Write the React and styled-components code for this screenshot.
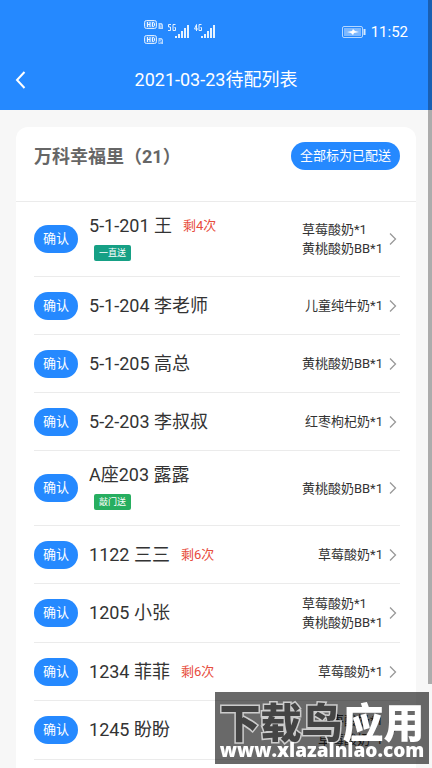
import React from 'react'
import styled, { createGlobalStyle } from 'styled-components'

const GlobalStyle = createGlobalStyle`
  body {
    margin: 0;
    background: #f7f7f7;
    font-family: Roboto, 'Noto Sans CJK SC', sans-serif;
    color: #333;
  }

  *,
  *::before,
  *::after {
    box-sizing: border-box;
  }
`

const Screen = styled.div`
  display: flex;
  flex-direction: column;
  height: 100vh;
  overflow: hidden;
`

const Header = styled.header`
  flex: none;
  background: #2589ff;
  color: #fff;
`

const StatusBar = styled.div`
  display: flex;
  align-items: center;
  justify-content: space-between;
  height: 50px;
  padding: 14px 24px 0 144px;
`

const Signal = styled.svg`
  display: block;
  width: 80px;
  height: 28px;
  font-weight: 700;
`

const Clock = styled.div`
  display: flex;
  align-items: center;
  gap: 5px;
  font-size: 15px;
  line-height: 20px;
`

const NavBar = styled.div`
  display: grid;
  grid-template-columns: 40px 1fr 40px;
  align-items: center;
  height: 60px;
`

const BackButton = styled.button`
  display: flex;
  align-items: center;
  height: 40px;
  padding: 0 0 0 15px;
  border: 0;
  background: none;
  color: inherit;
`

const PageTitle = styled.h1`
  margin: 0;
  font-size: 18px;
  font-weight: 400;
  line-height: 26px;
  text-align: center;
`

const Card = styled.main`
  flex: 1 0 auto;
  margin: 17px 16px 0;
  background: #fff;
  border-radius: 12px 12px 0 0;
`

const CardHeader = styled.div`
  display: flex;
  align-items: flex-start;
  justify-content: space-between;
  height: 75px;
  padding: 15px 16px 0 18px;
  border-bottom: 1px solid #ebebeb;
`

const Community = styled.h2`
  margin: 0;
  color: #666;
  font-size: 18px;
  font-weight: 700;
  line-height: 30px;
`

const PillButton = styled.button`
  flex: none;
  height: 28px;
  padding: 0 9px;
  border: 0;
  border-radius: 14px;
  background: #2589ff;
  color: #fff;
  font-family: inherit;
  font-size: 13px;
  line-height: 28px;
`

const List = styled.ul`
  margin: 0;
  padding: 0 16px 0 18px;
  list-style: none;
`

const Row = styled.li`
  display: flex;
  align-items: center;
  min-height: 58px;
  padding: 10px 0;
  border-bottom: 1px solid #ebebeb;
`

const Customer = styled.div`
  flex: 1;
  padding-left: 11px;
`

const NameLine = styled.div`
  display: flex;
  align-items: center;
  gap: 11px;
  line-height: 28px;
`

const Name = styled.span`
  font-size: 18px;
`

const Remaining = styled.span`
  color: #e74c3c;
  font-size: 13px;
`

const Tag = styled.span`
  display: block;
  width: fit-content;
  margin: 5px 0 5px 5px;
  padding: 0 5px;
  border-radius: 2px;
  background: ${props => props.$color};
  color: #fff;
  font-size: 9px;
  line-height: 16px;
`

const Products = styled.div`
  font-size: 13px;
  line-height: 19px;
`

const Arrow = styled.svg`
  flex: none;
  display: block;
  width: 8px;
  height: 12px;
  margin: 0 3px 0 6px;
`

const ScrollThumb = styled.div`
  position: fixed;
  top: 0;
  right: 0;
  width: 4px;
  height: 89vh;
  background: rgba(0, 0, 0, 0.3);
`

const Watermark = styled.div`
  position: fixed;
  right: 3px;
  bottom: 4px;
  width: 214px;
  height: 72px;
  padding-top: 7px;
  background: rgba(0, 0, 0, 0.59);
  color: #fff;
  text-align: center;
  white-space: nowrap;
`

const WatermarkName = styled.div`
  font-family: 'Noto Sans CJK SC', sans-serif;
  font-size: 41px;
  font-weight: 900;
  line-height: 42px;
`

const Outlined = styled.span`
  color: #444;
  -webkit-text-stroke: 3px #ccc;
  paint-order: stroke fill;
`

const WatermarkUrl = styled.div`
  font-family: 'Open Sans', sans-serif;
  font-size: 19px;
  font-weight: 800;
  line-height: 18px;
`

const deliveries = [
  {
    name: '5-1-201 王',
    left: 4,
    tag: '一直送',
    tagColor: '#16a085',
    products: ['草莓酸奶*1', '黄桃酸奶BB*1'],
  },
  { name: '5-1-204 李老师', products: ['儿童纯牛奶*1'] },
  { name: '5-1-205 高总', products: ['黄桃酸奶BB*1'] },
  { name: '5-2-203 李叔叔', products: ['红枣枸杞奶*1'] },
  {
    name: 'A座203 露露',
    tag: '敲门送',
    tagColor: '#27ae60',
    products: ['黄桃酸奶BB*1'],
  },
  { name: '1122 三三', left: 6, products: ['草莓酸奶*1'] },
  { name: '1205 小张', products: ['草莓酸奶*1', '黄桃酸奶BB*1'] },
  { name: '1234 菲菲', left: 6, products: ['草莓酸奶*1'] },
  { name: '1245 盼盼', products: ['红枣酸奶*1', '草莓酸奶*1'] },
]

const HdBadge = ({ y, sim }) => (
  <g transform={`translate(0 ${y})`}>
    <rect x="0.5" y="0.5" width="12" height="8" rx="2" fill="#4a9dff" stroke="#d8eaff" />
    <path
      d="M3.5 2v5M6 2v5M3.5 4.5H6M8.5 2.5v4h1l1-1v-2l-1-1z"
      fill="none"
      stroke="#f2f8ff"
    />
    <path d="M14.5 3h3l1.5 1.5V9h-4.5z" fill="#b9d9ff" />
    <path
      d={sim === 1 ? 'M16 5h1v3' : 'M15.5 5h2v1.5h-2V8h2'}
      fill="none"
      stroke="#2589ff"
      strokeWidth="0.7"
    />
  </g>
)

const Bars = ({ x }) => (
  <path
    transform={`translate(${x} 1)`}
    d="M1 19v-2M4 19v-4M7 19v-7M10 19v-10M13 19v-13"
    stroke="#e6f2ff"
    strokeWidth="2"
  />
)

const SignalIcons = () => (
  <Signal viewBox="0 0 80 28" aria-hidden="true">
    <HdBadge y={2} sim={1} />
    <HdBadge y={17} sim={2} />
    <g fill="none" stroke="#e6f2ff" strokeWidth="1">
      <path d="M27 6.500h-2.500v2.500h2v3.500h-2.500" />
      <path d="M31.500 6.500h-2.500v6h2.500v-3h-1" />
      <path d="M52.500 13V6.500l-2 4.500h3.500" />
      <path d="M57.500 6.500h-2.500v6h2.500v-3h-1" />
    </g>
    <Bars x={31} />
    <Bars x={57} />
  </Signal>
)

const Battery = () => (
  <svg width="24" height="12" viewBox="0 0 24 12" aria-hidden="true">
    <rect x="0.5" y="0.5" width="20" height="11" rx="1.500" fill="none" stroke="#b5d7ff" />
    <rect x="2" y="2" width="17" height="8" fill="#7db8ff" />
    <path d="M5 6l5-1 1-2 2 2 4 1-5 1-1 2-2-2z" fill="#fff" />
    <path d="M22.500 3v6" stroke="#d8eaff" strokeWidth="2" />
  </svg>
)

const Delivery = ({ name, left, tag, tagColor, products }) => (
  <Row>
    <PillButton type="button">确认</PillButton>
    <Customer>
      <NameLine>
        <Name>{name}</Name>
        {left && <Remaining>剩{left}次</Remaining>}
      </NameLine>
      {tag && <Tag $color={tagColor}>{tag}</Tag>}
    </Customer>
    <Products>
      {products.map(product => (
        <div key={product}>{product}</div>
      ))}
    </Products>
    <Arrow viewBox="0 0 8 12" aria-hidden="true">
      <path
        d="M1 0.500L6.500 6L1 11.500"
        fill="none"
        stroke="#999"
        strokeWidth="1.300"
      />
    </Arrow>
  </Row>
)

const App = () => (
  <>
    <GlobalStyle />
    <Screen>
      <Header>
        <StatusBar>
          <SignalIcons />
          <Clock>
            <Battery />
            <span>11:52</span>
          </Clock>
        </StatusBar>
        <NavBar>
          <BackButton type="button" aria-label="返回">
            <svg width="11" height="18" viewBox="0 0 11 18" aria-hidden="true">
              <path d="M9.500 1L2 9l7.500 8" fill="none" stroke="#fff" strokeWidth="2" />
            </svg>
          </BackButton>
          <PageTitle>2021-03-23待配列表</PageTitle>
        </NavBar>
      </Header>
      <Card>
        <CardHeader>
          <Community>万科幸福里（21）</Community>
          <PillButton type="button">全部标为已配送</PillButton>
        </CardHeader>
        <List>
          {deliveries.map(delivery => (
            <Delivery key={delivery.name} {...delivery} />
          ))}
        </List>
      </Card>
    </Screen>
    <ScrollThumb />
    <Watermark>
      <WatermarkName>
        <Outlined>下载鸟</Outlined>应用
      </WatermarkName>
      <WatermarkUrl>www.xlazalnlao.com</WatermarkUrl>
    </Watermark>
  </>
)

export default App
